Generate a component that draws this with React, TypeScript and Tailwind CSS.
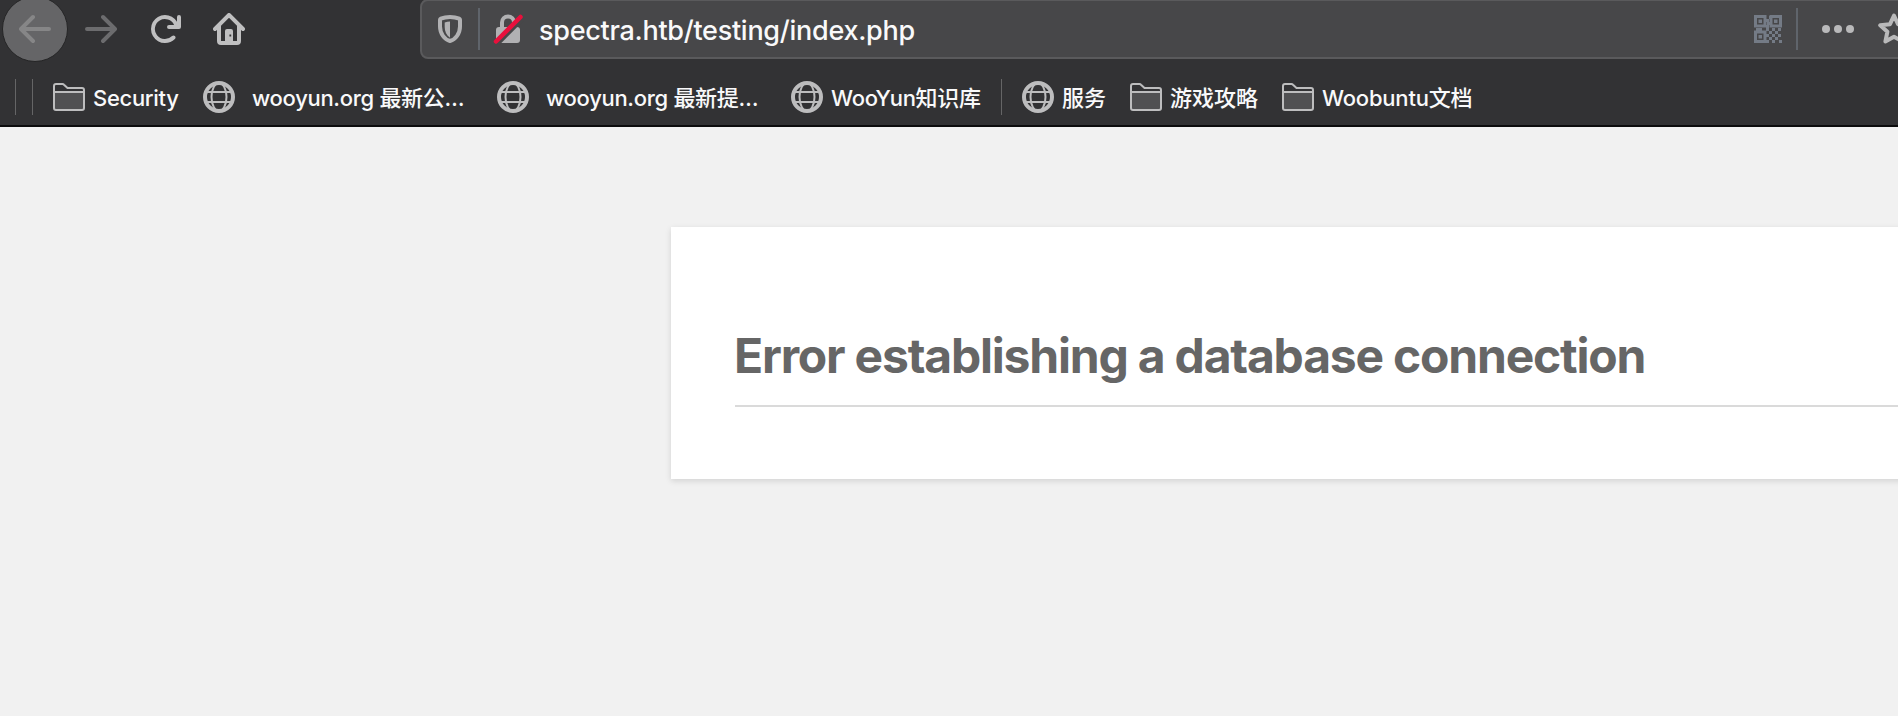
import type { ReactNode } from 'react';

const ARROW_LEFT =
  'M15 7H3.414l4.293-4.293a1 1 0 0 0-1.414-1.414l-6 6a1 1 0 0 0 0 1.414l6 6a1 1 0 0 0 1.414-1.414L3.414 9H15a1 1 0 0 0 0-2z';

function BackIcon() {
  return (
    <svg viewBox="0 0 16 16" className="size-8 fill-[#868687]">
      <path d={ARROW_LEFT} />
    </svg>
  );
}

function ForwardIcon() {
  return (
    <svg viewBox="0 0 16 16" className="size-8 -scale-x-100 fill-[#6c6c6e]">
      <path d={ARROW_LEFT} />
    </svg>
  );
}

function ReloadIcon() {
  return (
    <svg viewBox="0 0 16 16" className="size-8 fill-[#bfbfc0]">
      <path d="M15 1a1 1 0 0 0-1 1v2.418A6.995 6.995 0 1 0 8 15a6.954 6.954 0 0 0 4.95-2.05 1 1 0 0 0-1.414-1.414A5.019 5.019 0 1 1 12.549 6H10a1 1 0 0 0 0 2h5a1 1 0 0 0 1-1V2a1 1 0 0 0-1-1z" />
    </svg>
  );
}

function HomeIcon() {
  return (
    <svg viewBox="0 0 16 16" className="size-8 fill-[#bfbfc0]">
      <path
        fillRule="evenodd"
        d="M15.707 7.293l-7-7a1 1 0 0 0-1.414 0l-7 7a1 1 0 0 0 1.414 1.414L2 8.414V14a2 2 0 0 0 2 2h8a2 2 0 0 0 2-2V8.414l.293.293a1 1 0 0 0 1.414-1.414zM12 14h-2V9a1 1 0 0 0-1-1H7a1 1 0 0 0-1 1v5H4V6.414l4-4 4 4zM8.2 10.8h.9v1h-.9z"
      />
    </svg>
  );
}

function ShieldIcon() {
  return (
    <svg viewBox="0 0 32 32" className="size-8">
      <path
        d="M16 4c3.4 0 6.8.7 9.2 1.7.5.2.8.6.8 1.100v6.700C26 20.500 21.500 26.500 16 28 10.500 26.500 6 20.500 6 13.500V6.800c0-.5.3-.9.8-1.100C9.200 4.700 12.600 4 16 4z"
        fill="none"
        stroke="#b1b1b3"
        strokeWidth="4"
        strokeLinejoin="round"
      />
      <path d="M16 8.500v16.200c-3.500-2.400-5.300-6.200-5.300-10.700V9.600C12.300 9 14.200 8.600 16 8.500z" fill="#b1b1b3" />
    </svg>
  );
}

function InsecureLockIcon() {
  return (
    <svg viewBox="0 0 32 32" className="size-8">
      <path d="M10 15V9.500a6 6 0 0 1 12 0V15" fill="none" stroke="#b1b1b3" strokeWidth="4" />
      <rect x="4" y="14" width="24" height="16" rx="3" fill="#b1b1b3" />
      <path d="M5.500 31L31.500 5" stroke="#474749" strokeWidth="4" />
      <path d="M4 28.500L28.500 4" stroke="#e8103c" strokeWidth="4.500" strokeLinecap="round" />
    </svg>
  );
}

function QrIcon() {
  const dots = [
    [12, 4], [12, 10], [15, 1], [13, 7], [2, 13], [5, 13], [12, 13], [15, 16], [18, 13], [24, 13], [21, 16], [12, 19],
    [18, 19], [24, 19], [15, 22], [21, 22], [12, 25], [18, 25], [25, 25],
  ];
  return (
    <svg viewBox="0 0 28 28" className="size-7 text-[#747b86]">
      <g fill="none" stroke="currentColor" strokeWidth="3">
        <rect x="1.500" y="1.500" width="9.500" height="9.500" />
        <rect x="17" y="1.500" width="9.500" height="9.500" />
        <rect x="1.500" y="17" width="9.500" height="9.500" />
      </g>
      <g fill="currentColor">
        <rect x="4.500" y="4.500" width="3.500" height="3.500" />
        <rect x="20" y="4.500" width="3.500" height="3.500" />
        <rect x="4.500" y="20" width="3.500" height="3.500" />
        {dots.map(([x, y]) => (
          <rect key={`${x}-${y}`} x={x} y={y} width="3" height="3" />
        ))}
      </g>
    </svg>
  );
}

function MoreIcon() {
  return (
    <svg viewBox="0 0 32 8" className="h-2 w-8 fill-[#b9b9ba]">
      <circle cx="4" cy="4" r="4" />
      <circle cx="16" cy="4" r="4" />
      <circle cx="28" cy="4" r="4" />
    </svg>
  );
}

function StarIcon() {
  return (
    <svg viewBox="0 0 32 32" className="size-8 shrink-0">
      <path
        d="M16 2.500l4 8.700 9.800 1.100-7.200 6.400 2 9.800L16 23.700l-8.600 4.800 2-9.800-7.200-6.400 9.800-1.100z"
        fill="none"
        stroke="#b9b9ba"
        strokeWidth="4"
        strokeLinejoin="round"
      />
    </svg>
  );
}

function FolderIcon() {
  return (
    <svg viewBox="0 0 32 32" className="size-8 shrink-0">
      <path d="M1 11h30v15a2 2 0 0 1-2 2H3a2 2 0 0 1-2-2z" fill="#505052" />
      <path
        d="M3 3h6.500c.6 0 1.100.3 1.500.7L14.500 7H29a2 2 0 0 1 2 2v18a2 2 0 0 1-2 2H3a2 2 0 0 1-2-2V5a2 2 0 0 1 2-2zM1 11h30"
        fill="none"
        stroke="#bdbdbe"
        strokeWidth="2"
      />
    </svg>
  );
}

function GlobeIcon() {
  return (
    <svg viewBox="0 0 32 32" className="size-8 shrink-0" fill="none" stroke="#bdbdbe">
      <circle cx="16" cy="16" r="14" strokeWidth="4" />
      <ellipse cx="16" cy="16" rx="7.500" ry="14" strokeWidth="2" />
      <path d="M4 11h24M4 21h24" strokeWidth="2" />
    </svg>
  );
}

function Bookmark({ icon, className, children }: { icon: ReactNode; className: string; children: ReactNode }) {
  return (
    <div className={`flex shrink-0 items-center whitespace-nowrap ${className}`}>
      {icon}
      <span className="pt-0.5">{children}</span>
    </div>
  );
}

export default function App() {
  return (
    <div className="flex h-[716px] w-full flex-col overflow-hidden bg-[#f1f1f1] font-['Inter','Noto_Sans_CJK_SC',sans-serif]">
      <header className="h-[127px] shrink-0 border-b-2 border-[#0c0c0d] bg-[#323234]">
        <div className="flex h-[59px] items-start">
          <button className="-mt-1 ml-0.5 flex size-[66px] shrink-0 items-center justify-center rounded-full border border-[#252526] bg-[#656567]">
            <BackIcon />
          </button>
          <div className="mt-[13px] ml-[17px] flex shrink-0 gap-8">
            <ForwardIcon />
            <ReloadIcon />
            <HomeIcon />
          </div>
          <div className="-mt-px ml-[175px] flex h-[60px] w-[1500px] shrink-0 items-center rounded-l-lg border-2 border-[#5a5a5c] bg-[#474749] pl-3">
            <ShieldIcon />
            <span className="ml-3 h-[42px] w-0.5 bg-[#5f646b]" />
            <span className="ml-3">
              <InsecureLockIcon />
            </span>
            <span className="ml-[15px] w-[1215px] pt-1 text-[27px] leading-8 font-medium tracking-[-0.28px] whitespace-nowrap text-[#f9f9fa]">
              spectra.htb/testing/index.php
            </span>
            <QrIcon />
            <span className="ml-3.5 h-[42px] w-0.5 shrink-0 bg-[#5f646b]" />
            <span className="ml-6 shrink-0">
              <MoreIcon />
            </span>
            <span className="ml-6 shrink-0">
              <StarIcon />
            </span>
          </div>
        </div>
        <nav className="flex h-[66px] items-center pt-[9px] pl-[15px] text-[22px] leading-7 font-medium tracking-[-0.3px] text-[#f9f9fa]">
          <span className="h-9 w-px bg-[#656566]" />
          <span className="ml-4 h-9 w-px bg-[#656566]" />
          <Bookmark icon={<FolderIcon />} className="ml-5 w-[150px] gap-2">
            Security
          </Bookmark>
          <Bookmark icon={<GlobeIcon />} className="w-[294px] gap-[17px]">
            wooyun.org 最新公…
          </Bookmark>
          <Bookmark icon={<GlobeIcon />} className="w-[294px] gap-[17px]">
            wooyun.org 最新提…
          </Bookmark>
          <Bookmark icon={<GlobeIcon />} className="w-[210px] gap-2">
            WooYun知识库
          </Bookmark>
          <span className="h-9 w-px bg-[#656566]" />
          <Bookmark icon={<GlobeIcon />} className="ml-5 w-[108px] gap-2 tracking-normal">
            服务
          </Bookmark>
          <Bookmark icon={<FolderIcon />} className="w-[152px] gap-2 tracking-normal">
            游戏攻略
          </Bookmark>
          <Bookmark icon={<FolderIcon />} className="gap-2 tracking-[-0.2px]">
            Woobuntu文档
          </Bookmark>
        </nav>
      </header>
      <main className="pt-[100px] pl-[671px]">
        <section className="h-[252px] w-[1400px] bg-white px-16 pt-[98px] shadow-[0_2px_6px_rgba(0,0,0,0.13)]">
          <h1 className="-indent-px h-[82px] border-b-2 border-[#dadada] text-[48px] leading-[62px] font-bold tracking-[-1.2px] whitespace-nowrap text-[#666666]">
            Error establishing a database connection
          </h1>
        </section>
      </main>
    </div>
  );
}
